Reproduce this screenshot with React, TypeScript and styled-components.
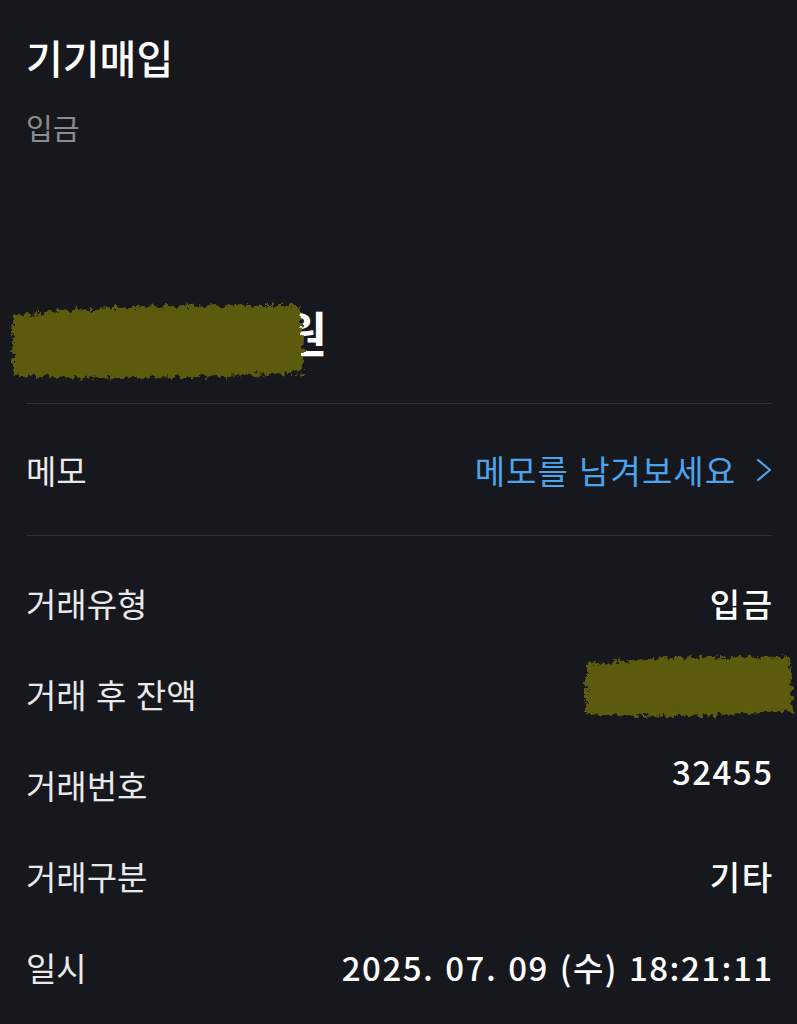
import React from 'react';
import styled, { createGlobalStyle } from 'styled-components';

const GlobalStyle = createGlobalStyle`
  html, body {
    margin: 0;
    padding: 0;
    background: #17181d;
  }
  body {
    font-family: 'Noto Sans CJK KR', 'Noto Sans', sans-serif;
    color: #ececee;
  }
`;

const Page = styled.div`
  min-height: 1024px;
  background: #17181d;
  padding: 33px 25px 0 26px;
  box-sizing: border-box;
  overflow: hidden;
`;

const Title = styled.h1`
  margin: 0;
  font-size: 40px;
  line-height: 48px;
  font-weight: 500;
  color: #ffffff;
`;

const SubTitle = styled.div`
  margin-top: 28px;
  font-size: 29px;
  line-height: 37px;
  color: #8b8b90;
`;

const AmountLine = styled.div`
  margin-top: 153px;
  height: 85px;
  display: flex;
  align-items: center;
`;

const Redaction = styled.svg<{ $left: number; $right: number }>`
  position: relative;
  z-index: 1;
  flex-shrink: 0;
  margin-left: ${(p) => p.$left}px;
  margin-right: ${(p) => p.$right}px;
`;

const Won = styled.span`
  font-size: 48px;
  font-weight: 700;
  color: #ffffff;
  line-height: 56px;
  margin-bottom: 22px;
`;

const Divider = styled.hr<{ $top?: number }>`
  margin: ${(p) => p.$top || 0}px 0 0;
  border: none;
  height: 1px;
  background: #2f3035;
`;

const MemoRow = styled.div`
  height: 131px;
  display: flex;
  align-items: center;
  justify-content: space-between;
`;

const Label = styled.span`
  font-size: 33px;
  line-height: 42px;
  font-weight: 400;
  color: #e9e9eb;
  word-spacing: 2px;
`;

const MemoLink = styled.a`
  display: flex;
  align-items: center;
  gap: 20px;
  font-size: 33px;
  line-height: 42px;
  color: #4ba4ec;
  text-decoration: none;
  letter-spacing: 1px;
  word-spacing: 2px;
`;

const InfoList = styled.div`
  padding-top: 21px;
  display: flex;
  flex-direction: column;
`;

const InfoRow = styled.div<{ $raise?: number }>`
  height: 91px;
  display: flex;
  align-items: center;
  justify-content: space-between;
  > :last-child {
    transform: translateY(${(p) => -(p.$raise || 0)}px);
  }
`;

const Value = styled.span`
  font-size: 33px;
  line-height: 42px;
  font-weight: 500;
  color: #ffffff;
  letter-spacing: 1.5px;
  word-spacing: 2px;
  margin-right: -1.5px;
`;

const Chevron = () => (
  <svg width="16" height="24" viewBox="0 0 16 24" fill="none">
    <path d="M2 2 L14 12 L2 22" stroke="#4ba4ec" strokeWidth="2.2" strokeLinecap="round" strokeLinejoin="round" />
  </svg>
);

const Scribble = ({ width, height, left, right, seed }: { width: number; height: number; left: number; right: number; seed: number }) => (
  <Redaction $left={left} $right={right} width={width} height={height} viewBox={`0 0 ${width} ${height}`}>
    <defs>
      <filter id={`rough${seed}`} x="-5%" y="-10%" width="110%" height="120%">
        <feTurbulence type="fractalNoise" baseFrequency="0.2" numOctaves="3" seed={seed} result="n" />
        <feDisplacementMap in="SourceGraphic" in2="n" scale="12" />
      </filter>
    </defs>
    <path
      d={`M8 ${height * 0.2} Q ${width * 0.3} ${height * 0.06} ${width - 10} 6 L ${width - 6} ${height * 0.86} Q ${width * 0.5} ${height - 2} 8 ${height * 0.9} Z`}
      fill="#5b5a0a"
      filter={`url(#rough${seed})`}
    />
  </Redaction>
);

type Info = { label: string; value?: string; raise?: number; hidden?: boolean };

const infos: Info[] = [
  { label: '거래유형', value: '입금' },
  { label: '거래 후 잔액', hidden: true, raise: 8 },
  { label: '거래번호', value: '32455', raise: 14 },
  { label: '거래구분', value: '기타' },
  { label: '일시', value: '2025. 07. 09 (수) 18:21:11' },
];

export default function App() {
  return (
    <>
      <GlobalStyle />
      <Page>
        <Title>기기매입</Title>
        <SubTitle>입금</SubTitle>
        <AmountLine>
          <Scribble width={305} height={85} left={-21} right={-27} seed={3} />
          <Won>원</Won>
        </AmountLine>
        <Divider $top={19} />
        <MemoRow>
          <Label>메모</Label>
          <MemoLink href="#">
            메모를 남겨보세요
            <Chevron />
          </MemoLink>
        </MemoRow>
        <Divider />
        <InfoList>
          {infos.map((info) => (
            <InfoRow key={info.label} $raise={info.raise}>
              <Label>{info.label}</Label>
              {info.hidden ? (
                <Scribble width={221} height={70} left={0} right={-27} seed={7} />
              ) : (
                <Value>{info.value}</Value>
              )}
            </InfoRow>
          ))}
        </InfoList>
      </Page>
    </>
  );
}
